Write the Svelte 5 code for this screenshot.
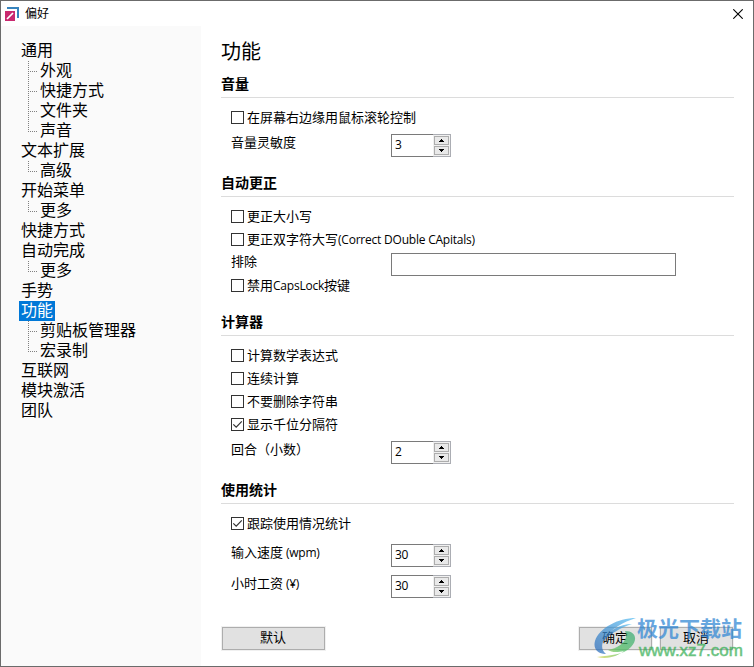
<script lang="ts">
	type TreeItem = { label: string; children?: string[] };

	const tree: TreeItem[] = [
		{ label: '通用', children: ['外观', '快捷方式', '文件夹', '声音'] },
		{ label: '文本扩展', children: ['高级'] },
		{ label: '开始菜单', children: ['更多'] },
		{ label: '快捷方式' },
		{ label: '自动完成', children: ['更多'] },
		{ label: '手势' },
		{ label: '功能', children: ['剪贴板管理器', '宏录制'] },
		{ label: '互联网' },
		{ label: '模块激活' },
		{ label: '团队' }
	];

	let selected = $state('功能');

	let settings = $state({
		volumeWheel: false,
		sensitivity: 3,
		fixCase: false,
		fixDouble: false,
		exclude: '',
		noCaps: false,
		math: false,
		continuous: false,
		keepString: false,
		thousands: true,
		decimals: 2,
		track: true,
		wpm: 30,
		wage: 30
	});

	type NumberKey = 'sensitivity' | 'decimals' | 'wpm' | 'wage';
	type CheckKey = 'volumeWheel' | 'fixCase' | 'fixDouble' | 'noCaps' | 'math' | 'continuous' | 'keepString' | 'thousands' | 'track';

	function step(key: NumberKey, delta: number) {
		settings[key] = Math.max(0, settings[key] + delta);
	}
</script>

{#snippet check(key: CheckKey, label: string, latin = '', rest = '')}
	<label class="check">
		<input type="checkbox" bind:checked={settings[key]} />
		<span class="box">
			{#if settings[key]}
				<svg viewBox="0 0 11 11"><path d="M1.3 5.3 4.2 8.2 9.8 2.4" /></svg>
			{/if}
		</span>
		<span class="text">{label}{#if latin}<span class="latin">{latin}</span>{/if}{rest}</span>
	</label>
{/snippet}

{#snippet number(key: NumberKey, label: string, latin = '')}
	<div class="field">
		<span class="name">{label}{#if latin}<span class="latin">&nbsp;{latin}</span>{/if}</span>
		<div class="spinner">
			<span class="value">{settings[key]}</span>
			<div class="arrows">
				<button aria-label="+" onclick={() => step(key, 1)}>
					<svg viewBox="0 0 5 3"><path d="M0 3V2H1V1H2V0H3V1H4V2H5V3Z" /></svg>
				</button>
				<button aria-label="-" onclick={() => step(key, -1)}>
					<svg viewBox="0 0 5 3"><path d="M0 0V1H1V2H2V3H3V2H4V1H5V0Z" /></svg>
				</button>
			</div>
		</div>
	</div>
{/snippet}

<div class="window">
	<header class="titlebar">
		<svg class="app-icon" viewBox="0 0 14 14">
			<path d="M2 0H14V11H12V2H2Z" fill="#3683bd" />
			<path d="M0 4H10V14H0Z" fill="#c9296f" />
			<path d="M2 12 8 6" stroke="#fff" stroke-width="1.7" />
		</svg>
		<span class="caption">偏好</span>
		<button class="close" aria-label="关闭">
			<svg viewBox="0 0 10 10"><path d="M0.3 0.3 9.7 9.7M9.7 0.3 0.3 9.7" /></svg>
		</button>
	</header>

	<div class="main">
		<nav class="sidebar">
			{#each tree as item}
				<button class="node" class:selected={item.label === selected} onclick={() => (selected = item.label)}>
					{item.label}
				</button>
				{#if item.children}
					<ul>
						{#each item.children as child}
							<li>{child}</li>
						{/each}
					</ul>
				{/if}
			{/each}
		</nav>

		<main class="content">
			<h1>功能</h1>

			<section>
				<h2>音量</h2>
				{@render check('volumeWheel', '在屏幕右边缘用鼠标滚轮控制')}
				{@render number('sensitivity', '音量灵敏度')}
			</section>

			<section>
				<h2>自动更正</h2>
				{@render check('fixCase', '更正大小写')}
				{@render check('fixDouble', '更正双字符大写', '(Correct DOuble CApitals)')}
				<div class="field exclude">
					<span class="name">排除</span>
					<input type="text" bind:value={settings.exclude} />
				</div>
				{@render check('noCaps', '禁用', 'CapsLock', '按键')}
			</section>

			<section>
				<h2>计算器</h2>
				{@render check('math', '计算数学表达式')}
				{@render check('continuous', '连续计算')}
				{@render check('keepString', '不要删除字符串')}
				{@render check('thousands', '显示千位分隔符')}
				{@render number('decimals', '回合（小数）')}
			</section>

			<section class="stats">
				<h2>使用统计</h2>
				{@render check('track', '跟踪使用情况统计')}
				{@render number('wpm', '输入速度', '(wpm)')}
				{@render number('wage', '小时工资', '(¥)')}
			</section>

			<footer>
				<button class="btn wide">默认</button>
				<button class="btn">确定</button>
				<button class="btn">取消</button>
			</footer>
		</main>
	</div>

	<div class="watermark">
		<svg viewBox="0 0 44 42">
			<defs>
				<linearGradient id="blue" x1="0" y1="1" x2="1" y2="0">
					<stop offset="0" stop-color="#2868b8" />
					<stop offset="1" stop-color="#58c0f4" />
				</linearGradient>
				<linearGradient id="green" x1="0" y1="1" x2="1" y2="0">
					<stop offset="0" stop-color="#e0d850" />
					<stop offset="0.45" stop-color="#50c060" />
					<stop offset="1" stop-color="#38a878" />
				</linearGradient>
			</defs>
			<path d="M42 1C24 1 5 11 1 24C-1 31 3 37 12 37C7 33 7 27 11 21C17 12 29 5 42 1Z" fill="url(#blue)" />
			<path d="M38 7C26 7 13 14 9 24C16 17 26 11 38 7Z" fill="url(#blue)" />
			<path d="M31 14C42 14 44 23 37 30C29 38 18 38 3 40C15 43 25 38 30 34C22 36 17 35 14 33C24 32 36 23 31 14Z" fill="url(#green)" />
		</svg>
		<div class="mark-text">
			<span class="site">极光下载站</span>
			<span class="url">www.xz7.com</span>
		</div>
	</div>
</div>

<style>
	:global(body) {
		margin: 0;
		background: #fff;
	}

	.window {
		position: relative;
		box-sizing: border-box;
		width: 754px;
		height: 667px;
		display: flex;
		flex-direction: column;
		border: 1px solid #6b6b6b;
		background: #fff;
		color: #000;
		font-family: 'Open Sans', 'Noto Sans CJK SC', sans-serif;
		font-size: 13px;
		overflow: hidden;
	}

	button {
		font: inherit;
		color: inherit;
		padding: 0;
		border: 0;
		background: none;
	}

	svg {
		display: block;
	}

	.titlebar {
		flex: none;
		height: 25px;
		display: flex;
		align-items: center;
		padding: 0 10px 0 4px;
		font-size: 12px;
	}

	.app-icon {
		width: 14px;
		height: 14px;
	}

	.caption {
		flex: 1;
		margin-left: 6px;
		line-height: 24px;
	}

	.close svg {
		width: 10px;
		height: 10px;
		stroke: #000;
		stroke-width: 1.1;
	}

	.main {
		flex: 1;
		display: flex;
		min-height: 0;
	}

	.sidebar {
		box-sizing: border-box;
		width: 200px;
		padding: 15px 0 0 18px;
		background: #fafafa;
		font-size: 16px;
		line-height: 18px;
	}

	.node {
		display: block;
		height: 20px;
		padding: 0 2px 2px;
		line-height: 18px;
	}

	.node.selected {
		background: #0078d7;
		color: #fff;
	}

	ul {
		margin: 0;
		padding: 0 0 0 9px;
		list-style: none;
	}

	li {
		display: flex;
		height: 20px;
		white-space: nowrap;
		background: repeating-linear-gradient(#808080 0 1px, transparent 1px 2px) 0 0 / 1px 100% no-repeat;
	}

	li:last-child {
		background-size: 1px 11px;
	}

	li::before {
		content: '';
		width: 9px;
		height: 1px;
		margin: 10px 3px 0 0;
		background: repeating-linear-gradient(90deg, #808080 0 1px, transparent 1px 2px);
	}

	.content {
		flex: 1;
		display: flex;
		flex-direction: column;
		padding: 10px 19px 16px 20px;
	}

	h1 {
		margin: 0;
		height: 34px;
		font-size: 20px;
		font-weight: 400;
		line-height: 31px;
	}

	section {
		margin-bottom: 11px;
	}

	h2 {
		box-sizing: border-box;
		height: 28px;
		margin: 0 0 8px;
		border-bottom: 1px solid #dcdcdc;
		font-size: 14px;
		font-weight: 700;
		line-height: 28px;
	}

	.check {
		display: flex;
		align-items: center;
		height: 23px;
		margin-left: 10px;
	}

	.check input {
		display: none;
	}

	.box {
		box-sizing: border-box;
		width: 13px;
		height: 13px;
		margin-right: 3px;
		border: 1px solid #333;
		background: #fff;
	}

	.box svg {
		width: 11px;
		height: 11px;
		fill: none;
		stroke: #333;
		stroke-width: 1.2;
	}

	.text,
	.name {
		line-height: 23px;
		white-space: nowrap;
	}

	.latin {
		font-size: 12px;
		letter-spacing: -0.22px;
	}

	.field {
		display: grid;
		grid-template-columns: 160px auto;
		justify-content: start;
		height: 24px;
		margin: 5px 0 0 10px;
	}

	.name {
		line-height: 17px;
	}

	.exclude {
		height: 21px;
		margin-top: 2px;
	}

	.exclude input {
		box-sizing: border-box;
		width: 285px;
		height: 23px;
		margin: 0;
		padding: 0 3px;
		border: 1px solid #7a7a7a;
		font: inherit;
	}

	.stats .field {
		margin-top: 7px;
	}

	.stats .check {
		margin-bottom: 9px;
	}

	.stats .check + .field {
		margin-top: 0;
	}

	.spinner {
		box-sizing: border-box;
		display: flex;
		justify-content: space-between;
		width: 60px;
		height: 23px;
		border: 1px solid #7a7a7a;
		border-right: 0;
	}

	.value {
		padding-left: 3px;
		font-size: 12px;
		letter-spacing: -0.4px;
		line-height: 20px;
	}

	.arrows {
		box-sizing: border-box;
		width: 18px;
		height: 23px;
		margin-top: -1px;
		display: flex;
		flex-direction: column;
		gap: 1px;
		padding: 1px;
		border: 1px solid #abadb3;
		border-left: 0;
		background: #f0f0f0;
	}

	.arrows button {
		flex: 1;
		display: flex;
		align-items: center;
		justify-content: center;
		width: 15px;
		border: 1px solid #adadad;
		background: #e9e9e9;
	}

	.arrows svg {
		width: 5px;
		height: 3px;
	}

	footer {
		display: flex;
		gap: 8px;
		margin: auto 1px 0;
	}

	.btn {
		box-sizing: border-box;
		width: 73px;
		height: 23px;
		padding: 0 1px 2px 0;
		border: 1px solid #adadad;
		background: #e1e1e1;
		box-shadow: 0 0 0 1px #f0f0f0;
		line-height: 19px;
	}

	.btn.wide {
		width: 103px;
		margin-right: auto;
	}

	.watermark {
		position: absolute;
		left: 593px;
		top: 616px;
		display: flex;
		opacity: 0.72;
		pointer-events: none;
	}

	.watermark > svg {
		width: 44px;
		height: 42px;
	}

	.mark-text {
		display: flex;
		flex-direction: column;
		margin-left: -1px;
		white-space: nowrap;
	}

	.site {
		color: #2f86d4;
		font-size: 21px;
		font-weight: 700;
		line-height: 22px;
	}

	.url {
		margin-left: 2px;
		color: #30ad50;
		font-family: 'Liberation Sans', sans-serif;
		font-size: 17px;
		line-height: 24px;
		-webkit-text-stroke: 0.5px #30ad50;
	}
</style>
